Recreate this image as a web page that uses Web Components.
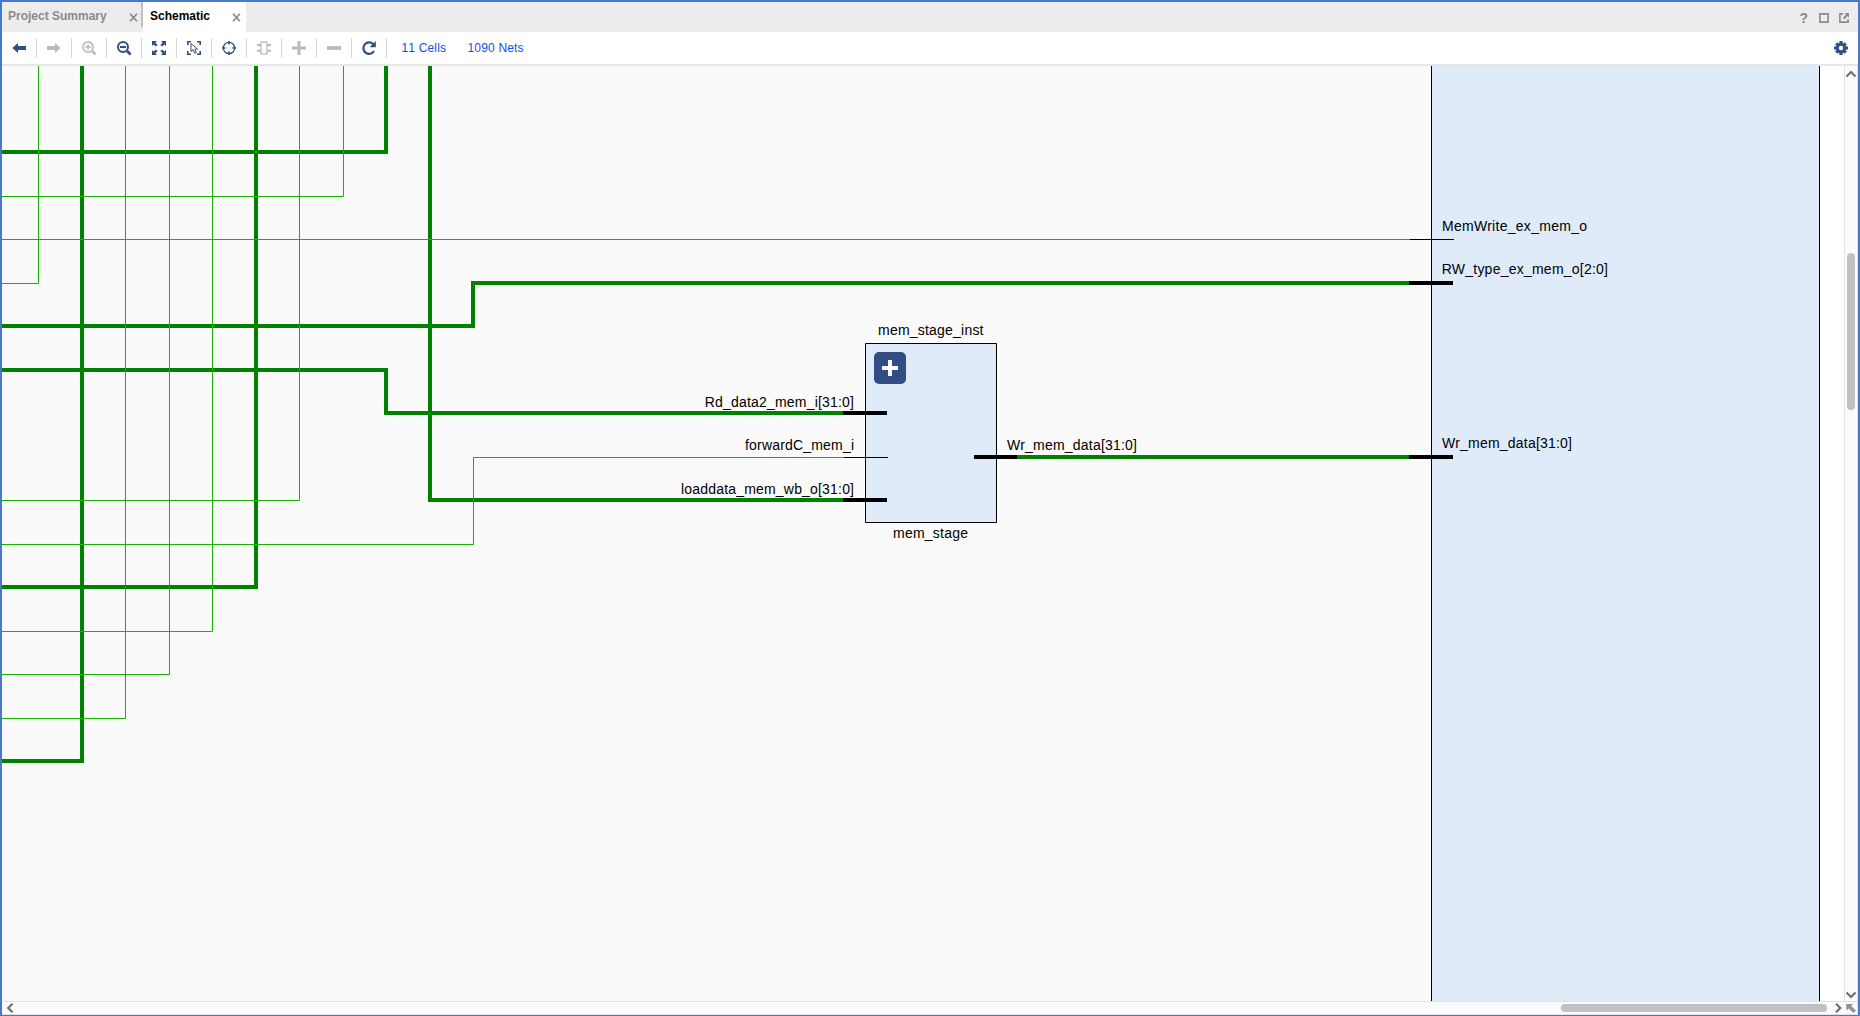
<!DOCTYPE html>
<html lang="en">
<head>
<meta charset="utf-8">
<title>Schematic</title>
<style>
html,body{margin:0;height:100%;overflow:hidden;background:#fff;font-family:"Liberation Sans",Arial,sans-serif}
</style>
</head>
<body>
<schematic-window></schematic-window>
<script>
const define = (name, html, setup) => {
  const t = document.createElement('template');
  t.innerHTML = html;
  customElements.define(name, class extends HTMLElement {
    connectedCallback() {
      if (this.shadowRoot) return;
      const root = this.attachShadow({mode: 'open'});
      root.append(t.content.cloneNode(true));
      if (setup) setup(this, root);
    }
  });
};

/* Toolbar glyphs, drawn in a 34 x 20 cell */
const ICONS = {
  back: '<path d="M10.3 10 16 5v3h8v4h-8v3z" fill="currentColor"/>',
  forward: '<path d="M23.7 10 18 5v3h-8v4h8v3z" fill="currentColor"/>',
  zoomin: '<g fill="none" stroke="currentColor"><circle cx="16" cy="9" r="5.1" stroke-width="1.6"/><path d="M20 13l3.6 3.4" stroke-width="2.5"/><path d="M13 9h6M16 6v6" stroke-width="1.4"/></g>',
  zoomout: '<g fill="none" stroke="currentColor"><circle cx="16" cy="9" r="5" stroke-width="2"/><path d="M20 13l3.6 3.4" stroke-width="2.8"/><path d="M13 9h6" stroke-width="2"/></g>',
  fit: '<path d="M10 3h5l-1.6 1.7 2.2 2.2-1.7 1.7-2.2-2.2L10 8zM24 3h-5l1.6 1.7-2.2 2.2 1.7 1.7 2.2-2.2L24 8zM10 17h5l-1.6-1.7 2.2-2.2-1.7-1.7-2.2 2.2L10 12zM24 17h-5l1.6-1.7-2.2-2.2 1.7-1.7 2.2 2.2L24 12z" fill="currentColor"/>',
  select: '<g fill="none" stroke="currentColor"><path d="M10.8 7V3.8H14M20 3.8h3.2V7M10.8 13v3.2H14M20 16.2h3.2V13" stroke-width="1.6"/><path d="M14 5.5v8l2-1.8 1.6 3.6 1.7-.7-1.5-3.4 2.7-.2z" stroke-width="1"/></g>',
  target: '<g fill="none" stroke="currentColor"><circle cx="17" cy="10" r="5.7" stroke-width="1.2"/><path d="M17 3v3.6M17 13.4v3.6M10 10h3.6M20.4 10h3.6" stroke-width="1.6"/></g>',
  chip: '<g fill="none" stroke="currentColor"><path d="M14 4.2h6v11.6h-6z" stroke-width="1.2"/><path d="M10 7h4M10 12.8h4M20 7h4M20 12.8h4" stroke-width="1.9"/></g>',
  plus: '<path d="M10 10h14M17 3v14" stroke="currentColor" stroke-width="3"/>',
  minus: '<path d="M10 10h14" stroke="currentColor" stroke-width="3.8"/>',
  refresh: '<path d="M21.2 6.2A5.7 5.7 0 1 0 22 13" fill="none" stroke="currentColor" stroke-width="2.2"/><path d="M23.8 3v6.2h-6.2z" fill="currentColor"/>'
};

define('tab-item', `<style>
:host{display:flex;align-items:center;justify-content:space-between;box-sizing:border-box;height:30px;font:bold 12px/14px "Liberation Sans",Arial,sans-serif;color:#8b8b8b;background:#ececec}
:host([active]){background:#fff;color:#000}
span{position:relative;top:-1px;white-space:nowrap}
svg{display:block;margin-top:1px;margin-right:var(--close-gap,4px)}
</style><span><slot></slot></span><svg width="9" height="9"><path d="M1 .8l7 7.4M8 .8L1 8.2" stroke="#858585" stroke-width="1.6"/></svg>`);

define('tab-strip', `<style>
:host{display:flex;height:30px;background:#ececec}
.a{width:139px;padding-left:6px;--close-gap:3.5px}.b{width:103px;padding-left:7px;--close-gap:5.5px}
i{width:2px;height:25px;background:#bebebe}
.win{margin-left:auto;margin-right:9px;display:flex;gap:10px;align-items:center;color:#8a8a8a;font:bold 14px/16px "Liberation Sans",Arial,sans-serif}
.win svg{display:block;margin-top:2px}.win span{margin-top:2px;width:9.5px}
</style><tab-item class="a">Project Summary</tab-item><i></i><tab-item class="b" active>Schematic</tab-item>
<div class="win"><span>?</span><svg width="10" height="10"><path d="M.9.9h8.2v8.2H.9z" fill="none" stroke="currentColor" stroke-width="1.6"/></svg>
<svg width="10" height="10"><path d="M4.2.9H.9v8.2h8.2V6.2" fill="none" stroke="currentColor" stroke-width="1.6"/><path d="M5.6 0H10v4.4L8.6 3 5.4 6.2 4 4.8 7.1 1.6z" fill="currentColor"/></svg></div>`);

define('tool-button', `<style>
:host{display:flex;align-items:center;height:20px;width:34px;border-right:1px solid #d6d6d6;color:#314e84}
:host([off]){color:#bababa}
svg{display:block}
</style><svg width="34" height="20"></svg>`, (el, root) => {
  root.querySelector('svg').innerHTML = ICONS[el.getAttribute('icon')];
});

define('tool-bar', `<style>
:host{display:flex;align-items:center;height:32px;background:#fff;border-bottom:2px solid #e6e6e6}
a{font:12px/14px "Liberation Sans",Arial,sans-serif;letter-spacing:.17px;font-kerning:none;color:#0f50f0;white-space:nowrap;margin-top:-1px}
a.c{margin-left:14.5px;width:66px}
.gear{margin-left:auto;margin-right:10px;display:block}
</style>
<tool-button icon="back"></tool-button><tool-button icon="forward" off></tool-button><tool-button icon="zoomin" off></tool-button><tool-button icon="zoomout"></tool-button><tool-button icon="fit"></tool-button><tool-button icon="select"></tool-button><tool-button icon="target"></tool-button><tool-button icon="chip" off></tool-button><tool-button icon="plus" off></tool-button><tool-button icon="minus" off></tool-button><tool-button icon="refresh"></tool-button>
<a class="c">11 Cells</a><a>1090 Nets</a>
<svg class="gear" width="14" height="14" viewBox="-7 -7 14 14"><g stroke="#314e84" stroke-width="3.2"><path d="M0-7V7M-7 0H7M-4.7-4.7 4.7 4.7M4.7-4.7-4.7 4.7"/></g><circle r="5.2" fill="#314e84"/><circle r="2.2" fill="#fff"/></svg>`);

const bus = ['M2 152H386V66','M82 66V761H2','M256 66V587H2','M430 66V500H844','M2 326H473V283H1410','M2 370H386V413H844','M1016 457H1410'];
const wire = ['M38.5 66V283.5H2','M125.5 66V718.5H2','M169.5 66V674.5H2','M212.5 66V631.5H2','M299.5 66V500.5H2','M343.5 66V196.5H2','M2 239.5H1410','M2 544.5H473.5V457.5H844'];
const labels = [
  ['mem_stage_inst',878,335,105.5],['mem_stage',893,538,75],
  ['Rd_data2_mem_i[31:0]',704.7,407,149.3],['forwardC_mem_i',745,450,109],['loaddata_mem_wb_o[31:0]',681,494,173],
  ['Wr_mem_data[31:0]',1007,450,130],['MemWrite_ex_mem_o',1442,231,145],['RW_type_ex_mem_o[2:0]',1441.7,274,166.3],['Wr_mem_data[31:0]',1442,448,130]];

define('schematic-canvas', `<style>
:host{display:block;overflow:hidden;background:#fafafa}
svg{display:block}
text{font:14px "Liberation Sans",Arial,sans-serif;fill:#000}
</style><svg width="1842" height="935" viewBox="2 66 1842 935"></svg>`, (el, root) => {
  root.querySelector('svg').innerHTML =
    '<path d="M1820 66h24v935h-24z" fill="#fff"/><path d="M1431 66h389v935h-389z" fill="#dfebf9"/>' +
    '<path d="M1431.5 66v935M1819.5 66v935" stroke="#000"/>' +
    '<path d="M865.5 343.5h131v179h-131z" fill="#dfebf9" stroke="#000"/>' +
    '<g fill="none" stroke="#008200" stroke-width="4">' + bus.map(d => `<path d="${d}"/>`).join('') + '</g>' +
    '<g fill="none" stroke="#18b200">' + wire.map(d => `<path d="${d}"/>`).join('') + '</g>' +
    '<path d="M843 413h44M843 500h44M974 457h43M1409 283h44M1409 457h44" stroke="#000" stroke-width="4"/>' +
    '<path d="M844 457.5h44M1410 239.5h44" stroke="#000"/>' +
    '<rect x="874" y="352" width="32" height="32" rx="5" fill="#314e84"/><path d="M882 368h16M890 360v16" stroke="#fff" stroke-width="4"/>' +
    labels.map(([s, x, y, w]) => `<text x="${x}" y="${y}" textLength="${w}">${s}</text>`).join('');
});

define('scroll-bar', `<style>
:host{display:flex;box-sizing:border-box;background:#fbfbfb;justify-content:space-between;align-items:center}
:host([dir=v]){flex-direction:column;border-left:1px solid #e2e2e2;border-right:1px solid #e2e2e2;padding:4px 0 2px}
:host([dir=h]){border-top:1px solid #e2e2e2;border-bottom:1px solid #e2e2e2;padding:0 2px 0 4px}
b{background:#c1c1c1;border-radius:4px;flex:none}
:host([dir=v]) b{width:8px;height:157px;margin-top:175px;margin-bottom:auto;margin-left:-1px}
:host([dir=h]) b{height:8px;width:266px;margin-left:auto;margin-right:7px;margin-top:-1px}
svg{display:block;flex:none;fill:none;stroke:#707070;stroke-width:2.2}
:host([dir=v]) .h,:host([dir=h]) .v{display:none}
</style>
<svg class="v" width="12" height="8"><path d="M1.5 6.5 6 2l4.5 4.5"/></svg><svg class="h" width="8" height="10"><path d="M6.5.8 2.2 5l4.3 4.2"/></svg>
<b></b>
<svg class="v" width="12" height="8"><path d="M1.5 1.5 6 6l4.5-4.5"/></svg><svg class="h" width="8" height="10"><path d="M2 .8 6.3 5 2 9.2"/></svg>`);

define('scroll-corner', `<style>
:host{display:flex;box-sizing:border-box;align-items:center;justify-content:center;background:#fbfbfb;border:solid #e2e2e2;border-width:1px 1px 1px 0}
svg{display:block}
</style><svg width="10" height="9"><path d="M0 0h7L5.2 2 10 6.6 7.6 9 2.6 4.4.5 6.5z" fill="#939393"/></svg>`);

define('schematic-window', `<style>
:host{display:flex;flex-direction:column;box-sizing:border-box;width:1860px;height:1016px;border:2px solid #4778c9;border-bottom-width:1px;background:#fff}
main{flex:1;min-height:0;display:grid;grid-template:935px 1fr / 1842px 1fr}
</style><tab-strip></tab-strip><tool-bar></tool-bar>
<main><schematic-canvas></schematic-canvas><scroll-bar dir="v"></scroll-bar><scroll-bar dir="h"></scroll-bar><scroll-corner></scroll-corner></main>`);
</script>
</body>
</html>
